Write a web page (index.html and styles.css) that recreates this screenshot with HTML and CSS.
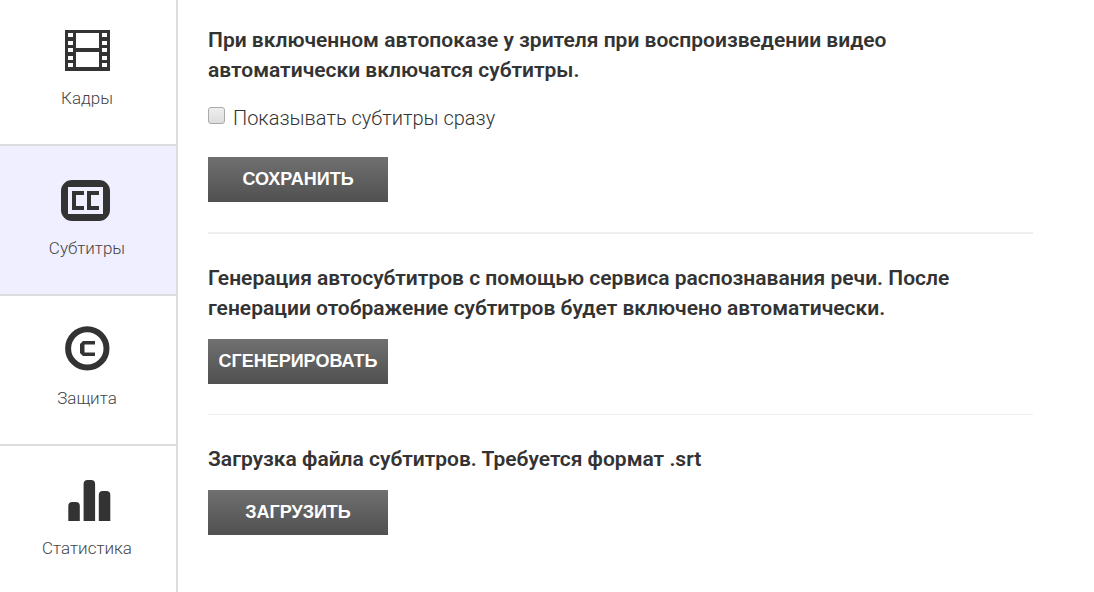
FILE: index.html
```html
<!DOCTYPE html>
<html lang="ru">
<head>
  <meta charset="UTF-8" />
  <meta name="viewport" content="width=device-width, initial-scale=1" />
  <title>Субтитры</title>
  <link rel="stylesheet" href="styles.css">
</head>
<body>
  <div class="layout">
    <nav class="sidebar">
      <a class="tab" href="#frames">
        <svg class="icon" viewBox="0 0 52 48" aria-hidden="true">
          <path fill-rule="evenodd" d="M4 4h45v41H4zM15 7v15h23V7zM15 26v15h23V26zM7 7h5v4H7zM7 15h5v4H7zM7 22h5v4H7zM7 30h5v4H7zM7 37h5v4H7zM41 7h5v4h-5zM41 15h5v4h-5zM41 22h5v4h-5zM41 30h5v4h-5zM41 37h5v4h-5z" />
        </svg>
        <span>Кадры</span>
      </a>
      <a class="tab active" href="#subtitles">
        <svg class="icon" viewBox="0 0 52 48" aria-hidden="true">
          <path fill-rule="evenodd" d="M11 4h27a11 11 0 0 1 11 11v19a11 11 0 0 1-11 11H11a11 11 0 0 1-11-11V15a11 11 0 0 1 11-11zM7 11v27h35V11z" />
          <path d="M11 15h12v4h-8v11h8v4H11zM26 15h12v4h-8v11h8v4H26z" />
        </svg>
        <span>Субтитры</span>
      </a>
      <a class="tab" href="#protection">
        <svg class="icon" viewBox="0 0 52 48" aria-hidden="true">
          <circle class="ring" cx="26.3" cy="22.4" r="19.2" />
          <path d="M22 15h12v3.5H23.5v8H34V30H22l-3-3v-9z" />
        </svg>
        <span>Защита</span>
      </a>
      <a class="tab" href="#stats">
        <svg class="icon" viewBox="0 0 52 48" aria-hidden="true">
          <path d="M7.3 45V30q0-4 4-4h3.5q4 0 4 4v15zM22.6 45V8q0-4 4-4h3.5q4 0 4 4v37zM37.8 45V19q0-4 4-4h3.5q4 0 4 4v26z" />
        </svg>
        <span>Статистика</span>
      </a>
    </nav>

    <main class="content">
      <section class="block">
        <h2>При включенном автопоказе у зрителя при воспроизведении видео автоматически включатся субтитры.</h2>
        <div class="option">
          <input type="checkbox" id="showSubtitles" />
          <label for="showSubtitles">Показывать субтитры сразу</label>
        </div>
        <button type="button">Сохранить</button>
      </section>

      <section class="block">
        <h2>Генерация автосубтитров с помощью сервиса распознавания речи. После генерации отображение субтитров будет включено автоматически.</h2>
        <button type="button">Сгенерировать</button>
      </section>

      <section class="block">
        <h2>Загрузка файла субтитров. Требуется формат .srt</h2>
        <button type="button">Загрузить</button>
      </section>
    </main>
  </div>
</body>
</html>
```

FILE: styles.css
```css
* {
  box-sizing: border-box;
}
body {
  margin: 0;
  font-family: Roboto, "Open Sans", sans-serif;
  background: #fff;
  color: #333;
}
.layout {
  display: flex;
  min-height: 100vh;
}
.sidebar {
  flex: 0 0 178px;
  border-right: 2px solid #ddd;
}
.tab {
  display: flex;
  flex-direction: column;
  align-items: center;
  gap: 12px;
  height: 150px;
  padding: 30px 2px 0 0;
  border-bottom: 2px solid #ddd;
  color: #444;
  font-size: 17px;
  font-weight: 300;
  line-height: 24px;
  text-decoration: none;
}
.tab:first-child {
  height: 146px;
  padding-top: 26px;
}
.tab:last-child {
  height: 146px;
  border-bottom: none;
}
.active {
  background: #f0efff;
}
.icon {
  width: 52px;
  height: 48px;
  fill: #333;
}
.ring {
  fill: none;
  stroke: #333;
  stroke-width: 6;
}
.content {
  flex: 1;
  padding: 25px 61px 0 30px;
}
.block {
  padding-bottom: 30px;
  margin-bottom: 29px;
  border-bottom: 2px solid #eee;
}
.block + .block {
  border-bottom-width: 1px;
}
.block:last-child {
  border-bottom: none;
  margin-bottom: 0;
}
h2 {
  max-width: 760px;
  margin: 0 0 16px;
  font-size: 21px;
  font-weight: 600;
  line-height: 30px;
}
.option {
  display: flex;
  gap: 8px;
  margin-bottom: 22px;
  font-size: 20px;
  font-weight: 300;
  line-height: 34px;
}
.option input {
  appearance: none;
  width: 17px;
  height: 17px;
  margin: 6px 0 0;
  border: 1px solid #aaa;
  border-radius: 3px;
  background: linear-gradient(#eee, #ddd);
}
.option input:checked {
  background: #555;
}
button {
  display: block;
  width: 180px;
  height: 45px;
  padding: 0;
  border: none;
  background: linear-gradient(#707070, #505050);
  color: #fff;
  font-family: "Liberation Sans", Arial, sans-serif;
  font-size: 18px;
  font-weight: bold;
  text-transform: uppercase;
  cursor: pointer;
}
button:hover {
  opacity: 0.9;
}
```
